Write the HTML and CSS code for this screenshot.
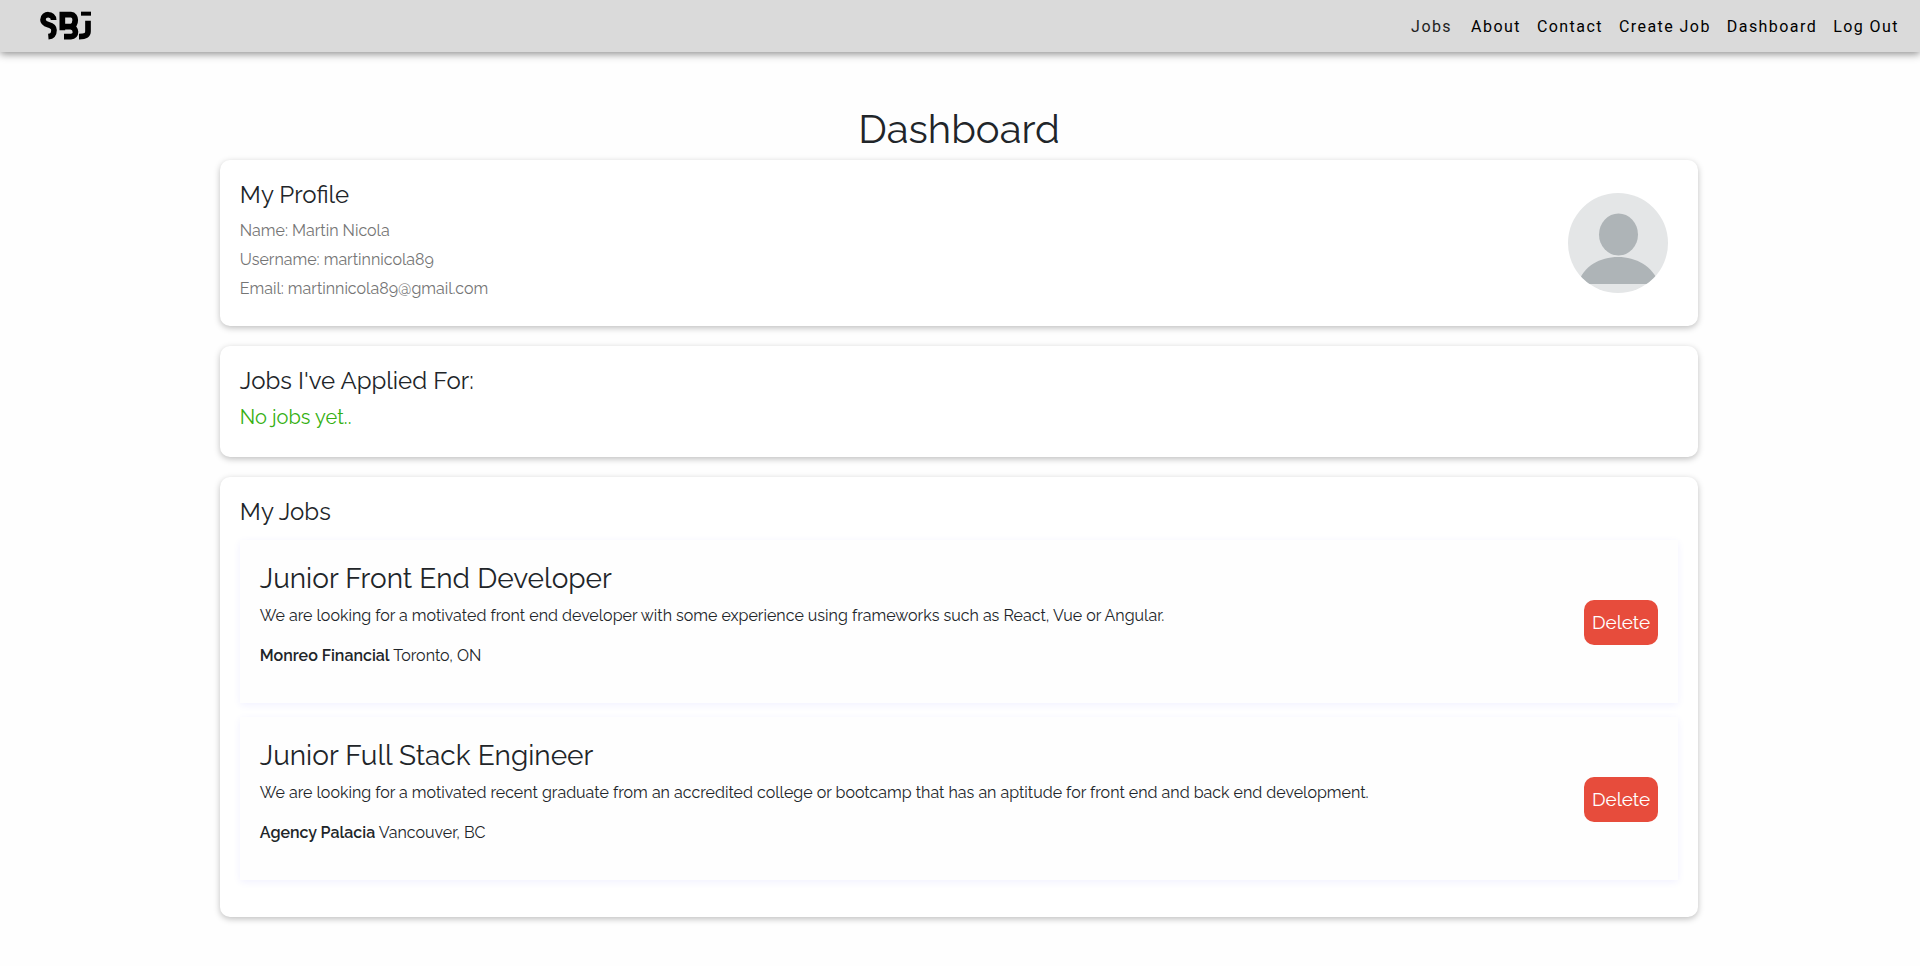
FILE: index.html
```html
<!DOCTYPE html>
<html lang="en">
<head>
<meta charset="utf-8">
<title>Dashboard</title>
<link rel="stylesheet" href="styles.css">
</head>
<body>
<header class="navbar">
  <a class="brand" href="#" aria-label="SBJ home">
    <svg class="logo" viewBox="117 33 159 87" fill="none" stroke="#000" stroke-width="17" aria-hidden="true">
      <path d="M161 60C161 39 129 39 129 59C129 80 162 68 162 90C162 103 157 109 145 110"/>
      <path d="M187 91V44H213C230 44 230 75 213 80H187M212 80C231 82 231 110 213 110H192"/>
      <path d="M243 41H273" stroke-width="12"/>
      <path d="M264 62V94C264 106 257 110 237 110"/>
    </svg>
  </a>
  <nav class="nav-links">
    <a class="nav-link nav-link-muted" href="#">Jobs</a>
    <a class="nav-link" href="#">About</a>
    <a class="nav-link" href="#">Contact</a>
    <a class="nav-link" href="#">Create Job</a>
    <a class="nav-link" href="#">Dashboard</a>
    <a class="nav-link" href="#">Log Out</a>
  </nav>
</header>
<main class="dashboard">
  <h1 class="page-title">Dashboard</h1>
  <section class="card profile">
    <div class="profile-info">
      <h2 class="card-title">My Profile</h2>
      <p>Name: Martin Nicola</p>
      <p>Username: martinnicola89</p>
      <p>Email: martinnicola89@gmail.com</p>
    </div>
    <svg class="avatar" viewBox="0 0 100 100" role="img" aria-label="Profile picture">
      <defs><clipPath id="disc"><circle cx="50" cy="50" r="50"/></clipPath></defs>
      <g clip-path="url(#disc)">
        <rect width="100" height="100" fill="#e4e6e7"/>
        <g fill="#aeb4b7">
          <ellipse cx="50.500" cy="41.500" rx="19.500" ry="21"/>
          <path d="M10 91C15 73 32 64 50 64S85 73 91 91Z"/>
        </g>
      </g>
    </svg>
  </section>
  <section class="card">
    <h2 class="card-title">Jobs I've Applied For:</h2>
    <p class="empty">No jobs yet..</p>
  </section>
  <section class="card card-jobs">
    <h2 class="card-title">My Jobs</h2>
    <div class="job-list">
      <article class="job">
        <div class="job-info">
          <h3 class="job-title">Junior Front End Developer</h3>
          <p class="job-text">We are looking for a motivated front end developer with some experience using frameworks such as React, Vue or Angular.</p>
          <p class="job-text"><strong>Monreo Financial</strong> Toronto, ON</p>
        </div>
        <button class="delete" type="button">Delete</button>
      </article>
      <article class="job">
        <div class="job-info">
          <h3 class="job-title">Junior Full Stack Engineer</h3>
          <p class="job-text">We are looking for a motivated recent graduate from an accredited college or bootcamp that has an aptitude for front end and back end development.</p>
          <p class="job-text"><strong>Agency Palacia</strong> Vancouver, BC</p>
        </div>
        <button class="delete" type="button">Delete</button>
      </article>
    </div>
  </section>
</main>
</body>
</html>
```
FILE: styles.css
```css
*, *::before, *::after { box-sizing: border-box; }
body {
  margin: 0;
  background: #fefefe;
  color: #212529;
  font-family: Raleway, Lato, sans-serif;
  font-size: 16px;
  line-height: 24px;
}
h1, h2, h3, p { margin: 0; font-weight: 400; }
.navbar {
  display: flex;
  align-items: center;
  justify-content: space-between;
  min-height: 52px;
  padding: 0 21px 0 39px;
  background: #dadada;
  box-shadow: 0 2px 8px rgba(0, 0, 0, 0.45);
}
.brand { display: flex; padding-bottom: 2px; }
.logo { width: 53px; height: 29px; }
.nav-links { display: flex; gap: 16px; padding-top: 2px; }
.nav-link {
  color: #000;
  font-family: Roboto, sans-serif;
  letter-spacing: 0.09em;
  text-decoration: none;
}
.nav-link-muted { color: #222; margin-right: 3px; }
.dashboard {
  display: flex;
  flex-direction: column;
  gap: 20px;
  width: 77%;
  margin-left: 11.45%;
  padding: 53px 0 48px;
}
.page-title {
  margin-bottom: -13px;
  font-size: 40px;
  line-height: 48px;
  text-align: center;
}
.card {
  padding: 20px 20px 24px;
  border-radius: 10px;
  background: #fff;
  box-shadow: 0 2px 6px rgba(0, 0, 0, 0.25);
}
.card-title { margin-bottom: 8px; font-size: 24px; line-height: 29px; }
.profile {
  display: flex;
  align-items: center;
  justify-content: space-between;
  padding: 20px 30px 25px 20px;
}
.profile .card-title { margin-bottom: 10px; }
.profile p { color: #757575; }
.profile p + p { margin-top: 5px; }
.avatar { width: 100px; height: 100px; margin-top: 5px; }
.empty { padding-bottom: 2px; color: #35b012; font-size: 20px; line-height: 28px; }
.card-jobs { padding-bottom: 37px; }
.job-list { display: grid; gap: 14px; padding-top: 6px; }
.job {
  display: flex;
  align-items: center;
  justify-content: space-between;
  gap: 20px;
  padding: 21px 20px 19px;
  background: #fefefe;
  box-shadow: 0 2px 8px rgba(0, 0, 255, 0.06);
}
.job-info { padding: 1px 0 16px; }
.job-title { margin-bottom: 8px; font-size: 28px; line-height: 34px; }
.job-text + .job-text { margin-top: 16px; }
.job-text strong { font-weight: 600; }
.delete {
  padding: 8px;
  border: 0;
  border-radius: 10px;
  background: #e74c3c;
  color: #fff;
  font: inherit;
  font-size: 19px;
  line-height: 29px;
  cursor: pointer;
}
```
